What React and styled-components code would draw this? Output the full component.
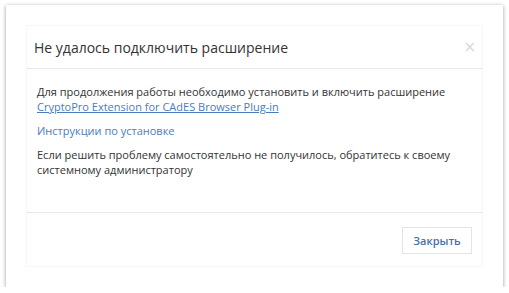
import React from "react";
import styled, { createGlobalStyle } from "styled-components";

const GlobalStyle = createGlobalStyle`
  html, body {
    margin: 0;
    padding: 0;
    background: #ffffff;
  }
  body {
    font-family: "Open Sans", "Noto Sans", sans-serif;
    color: #333333;
  }
`;

const Frame = styled.div`
  box-sizing: border-box;
  margin: 5px 0 0 6px;
  width: 497px;
  height: 282px;
  background: #ffffff;
  box-shadow: 0 1px 4px rgba(0, 0, 0, 0.4);
  padding: 20px 20px 0 20px;
`;

const Dialog = styled.div`
  box-sizing: border-box;
  height: 242px;
  border: 1px solid #fbf6f2;
  display: flex;
  flex-direction: column;
`;

const Header = styled.div`
  height: 42px;
  border-bottom: 1px solid #e6e6e6;
  display: flex;
  align-items: center;
  justify-content: space-between;
  padding: 0 6px 0 7px;
`;

const Title = styled.h4`
  margin: 0;
  font-size: 14px;
  font-weight: 400;
  color: #333333;
`;

const Close = styled.button`
  border: none;
  background: none;
  padding: 0;
  font-family: "DejaVu Sans", sans-serif;
  font-size: 15px;
  line-height: 1;
  color: #d8d8d8;
  cursor: pointer;
`;

const Body = styled.div`
  flex: 1;
  padding: 15px 6px 0 10px;
  border-bottom: 1px solid #e6e6e6;
  font-size: 11px;
  line-height: 15px;
`;

const Para = styled.p`
  margin: 0 0 9px 0;
`;

const Link = styled.a`
  color: #4a7cbd;
  text-decoration: ${p => (p.$underline ? "underline" : "none")};
`;

const Footer = styled.div`
  height: 53px;
  box-sizing: border-box;
  display: flex;
  align-items: flex-start;
  justify-content: flex-end;
  padding: 14px 10px 0 0;
`;

const Button = styled.button`
  width: 70px;
  height: 27px;
  border: 1px solid #e4e4e4;
  background: #ffffff;
  font-family: "Open Sans", sans-serif;
  font-size: 11px;
  font-weight: 600;
  color: #4a70a8;
  cursor: pointer;
`;

export default function App() {
  return (
    <>
      <GlobalStyle />
      <Frame>
        <Dialog>
          <Header>
            <Title>Не удалось подключить расширение</Title>
            <Close>×</Close>
          </Header>
          <Body>
            <Para>
              Для продолжения работы необходимо установить и включить расширение{" "}
              <Link $underline href="#">CryptoPro Extension for CAdES Browser Plug-in</Link>
            </Para>
            <Para>
              <Link href="#">Инструкции по установке</Link>
            </Para>
            <Para>
              Если решить проблему самостоятельно не получилось, обратитесь к своему
              системному администратору
            </Para>
          </Body>
          <Footer>
            <Button>Закрыть</Button>
          </Footer>
        </Dialog>
      </Frame>
    </>
  );
}
